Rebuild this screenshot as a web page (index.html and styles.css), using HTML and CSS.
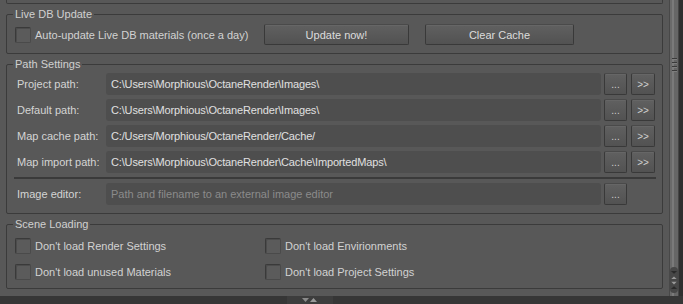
FILE: index.html
```html
<!DOCTYPE html>
<html lang="en">
<head>
  <meta charset="UTF-8">
  <title>Preferences</title>
  <link rel="stylesheet" href="styles.css">
</head>
<body>
  <div class="window">
    <div class="content">
      <div class="main">
        <!-- tail of the group above -->
        <div class="prev-group"></div>

        <!-- Live DB -->
        <fieldset class="group live-db">
          <legend>Live DB Update</legend>
          <div class="db-row">
            <label class="check db-check"><span class="box"></span>Auto-update Live DB materials (once a day)</label>
            <button class="btn update">Update now!</button>
            <button class="btn clear">Clear Cache</button>
          </div>
        </fieldset>

        <!-- Paths -->
        <fieldset class="group paths">
          <legend>Path Settings</legend>
          <div class="path-row">
            <span class="path-label">Project path:</span>
            <div class="field">C:\Users\Morphious\OctaneRender\Images\</div>
            <button class="btn small">...</button>
            <button class="btn small">&gt;&gt;</button>
          </div>
          <div class="path-row">
            <span class="path-label">Default path:</span>
            <div class="field">C:\Users\Morphious\OctaneRender\Images\</div>
            <button class="btn small">...</button>
            <button class="btn small">&gt;&gt;</button>
          </div>
          <div class="path-row">
            <span class="path-label">Map cache path:</span>
            <div class="field">C:/Users/Morphious/OctaneRender/Cache/</div>
            <button class="btn small">...</button>
            <button class="btn small">&gt;&gt;</button>
          </div>
          <div class="path-row">
            <span class="path-label">Map import path:</span>
            <div class="field">C:\Users\Morphious\OctaneRender\Cache\ImportedMaps\</div>
            <button class="btn small">...</button>
            <button class="btn small">&gt;&gt;</button>
          </div>
          <div class="separator"></div>
          <div class="path-row">
            <span class="path-label">Image editor:</span>
            <div class="field placeholder">Path and filename to an external image editor</div>
            <button class="btn small">...</button>
          </div>
        </fieldset>

        <!-- Scene loading -->
        <fieldset class="group scene">
          <legend>Scene Loading</legend>
          <div class="scene-grid">
            <label class="check"><span class="box"></span>Don't load Render Settings</label>
            <label class="check"><span class="box"></span>Don't load Envirionments</label>
            <label class="check"><span class="box"></span>Don't load unused Materials</label>
            <label class="check"><span class="box"></span>Don't load Project Settings</label>
          </div>
        </fieldset>
      </div>

      <div class="scroll">
        <div class="track">
          <div class="grip"><span></span><span></span><span></span><span></span></div>
          <div class="thumb">
            <svg width="9" height="26" viewBox="0 0 9 26">
              <path d="M1 3 L4.5 6 L8 3 Z" fill="#2a2a2a"/>
              <path d="M1.5 12 L4.5 9 L7.5 12 Z" fill="#9a9a9a"/>
              <path d="M1.5 15 L4.5 18 L7.5 15 Z" fill="#9a9a9a"/>
              <path d="M1 23 L4.5 20 L8 23 Z" fill="#2a2a2a"/>
            </svg>
          </div>
        </div>
      </div>
    </div>

    <div class="statusbar">
      <div class="handle">
        <svg width="16" height="5" viewBox="0 0 16 5">
          <path d="M0 0 H7 L3.5 4 Z" fill="#8a8a8a"/>
          <path d="M8 4 H15 L11.5 0 Z" fill="#9a9a9a"/>
        </svg>
      </div>
    </div>
  </div>
</body>
</html>
```

FILE: styles.css
```css
body {
  margin: 0;
  background-color: #585858;
  font-family: "Liberation Sans", Arial, sans-serif;
  font-size: 11px;
  color: #d2d2d2;
}
.window {
  width: 683px;
  height: 304px;
  display: flex;
  flex-direction: column;
  overflow: hidden;
}
.content {
  display: flex;
  height: 296px;
}
.main {
  width: 663px;
}
.prev-group {
  margin-left: 6px;
  width: 657px;
  height: 4px;
  box-sizing: border-box;
  border: 1px solid #3b3b3b;
  border-top: none;
  border-radius: 0 0 2px 2px;
}
.group {
  margin: 4px 0 0 6px;
  width: 657px;
  min-width: 0;
  box-sizing: border-box;
  border: 1px solid #3b3b3b;
  border-radius: 2px;
  padding: 2px 6px 8px 7px;
}
.group legend {
  padding: 0 2px;
  margin-left: -1px;
  line-height: 13px;
  color: #d0d0d0;
}
.live-db legend,
.scene legend {
  margin-left: -2px;
}

/* live db */
.live-db {
  padding: 3px 6px 8px 8px;
}
.db-row {
  display: flex;
  align-items: center;
  height: 21px;
}
.db-check {
  flex: 0 0 249px;
}
.btn {
  font-family: inherit;
  font-size: 11px;
  color: #dcdcdc;
  background: linear-gradient(#606060, #525252);
  border: 1px solid #393939;
  border-top-color: #4a4a4a;
  border-radius: 2px;
  box-shadow: inset 0 1px 0 #666;
  padding: 0;
  height: 21px;
}
.update {
  width: 145px;
}
.clear {
  width: 149px;
  margin-left: 16px;
}

/* checkboxes */
.check {
  display: flex;
  align-items: center;
  height: 22px;
  color: #d2d2d2;
}
.box {
  width: 16px;
  height: 16px;
  box-sizing: border-box;
  border: 1px solid #3a3a3a;
  border-right-color: #4a4a4a;
  border-bottom-color: #4a4a4a;
  border-radius: 2px;
  background: #5b5b5b;
  box-shadow: inset 1px 1px 0 #4c4c4c;
  margin-right: 4px;
}

/* paths */
.path-row {
  display: flex;
  height: 22px;
  align-items: center;
  margin-bottom: 4px;
}
.path-label {
  flex: 0 0 92px;
  box-sizing: border-box;
  padding-left: 3px;
  color: #d4d4d4;
}
.field {
  flex: 0 0 495px;
  box-sizing: border-box;
  height: 22px;
  line-height: 22px;
  background: #4e4e4e;
  border-radius: 3px;
  padding-left: 5px;
  color: #e0e0e0;
  letter-spacing: -0.15px;
  white-space: nowrap;
  overflow: hidden;
}
.field.placeholder {
  color: #8b8b8b;
  letter-spacing: 0;
}
.btn.small {
  width: 23px;
  height: 22px;
  margin-left: 3px;
  font-size: 10px;
  color: #cfcfcf;
}
.btn.small + .btn.small {
  width: 24px;
  margin-left: 4px;
}
.separator {
  height: 0;
  border-top: 2px solid #3a3a3a;
  margin: 0 0 4px 0;
}
.paths .path-row:last-child {
  margin-bottom: 0;
}

/* scene loading */
.scene {
  padding: 4px 6px 5px 8px;
}
.scene-grid {
  display: grid;
  grid-template-columns: 250px 1fr;
  row-gap: 4px;
}

/* scrollbar */
.scroll {
  width: 20px;
  display: flex;
  padding-left: 6px;
  box-sizing: border-box;
}
.track {
  width: 10px;
  display: flex;
  flex-direction: column;
  justify-content: space-between;
  border-left: 1px solid #484848;
  border-right: 1px solid #454545;
  background: linear-gradient(90deg, #6a6a6a 0 2px, #7a7a7a 2px 4px, #666 4px);
  box-sizing: border-box;
}
.scroll::after {
  content: "";
  width: 4px;
  background: #2f2f2f;
}
.grip {
  margin-top: 58px;
  display: flex;
  flex-direction: column;
  align-items: center;
  gap: 2px;
}
.grip span {
  width: 5px;
  height: 1px;
  background: #3a3a3a;
  border-bottom: 1px solid #7e7e7e;
}
.thumb {
  height: 26px;
  margin-bottom: 3px;
  background: #474747;
  border-radius: 4px;
  display: flex;
  justify-content: center;
}

/* bottom bar */
.statusbar {
  height: 8px;
  background: #363636;
  padding-left: 287px;
}
.handle {
  width: 46px;
  height: 8px;
  background: #3d3d3d;
  display: flex;
  align-items: flex-end;
  justify-content: center;
  padding-bottom: 1px;
  box-sizing: border-box;
}
```
